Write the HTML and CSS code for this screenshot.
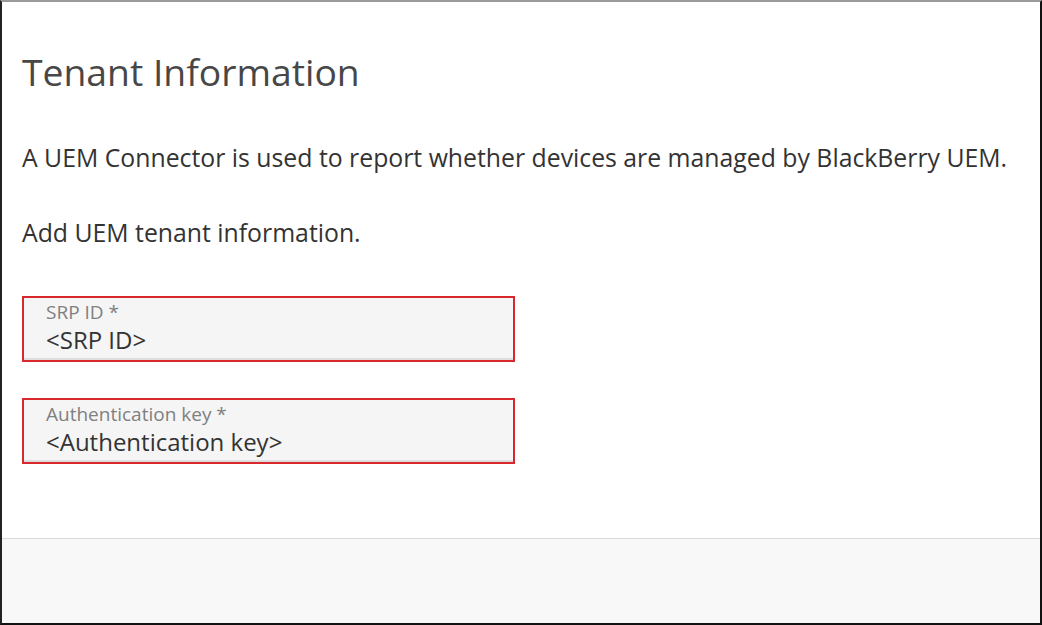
FILE: index.html
```html
<!DOCTYPE html>
<html lang="en">

<head>
    <meta charset="UTF-8">
    <meta name="viewport" content="width=device-width, initial-scale=1.0">
    <title>Tenant Information</title>
    <link rel="stylesheet" href="styles.css">
</head>

<body>
    <div id="dialog">
        <div id="content">
            <h1 class="title">Tenant Information</h1>
            <p class="text">A UEM Connector is used to report whether devices are managed by BlackBerry UEM.</p>
            <p class="text">Add UEM tenant information.</p>
            <div class="field">
                <div class="field-label">SRP ID *</div>
                <div class="field-value">&lt;SRP ID&gt;</div>
            </div>
            <div class="field">
                <div class="field-label">Authentication key *</div>
                <div class="field-value">&lt;Authentication key&gt;</div>
            </div>
        </div>
        <div id="footer"></div>
    </div>
</body>

</html>
```

FILE: styles.css
```css
html,
body {
    margin: 0;
    height: 100%;
}

body {
    font-family: "Open Sans", Arial, sans-serif;
    background-color: #fff;
}

#dialog {
    height: 625px;
    box-sizing: border-box;
    border-top: 2px solid #9a9a9a;
    border-left: 2px solid #222;
    border-right: 2px solid #111;
    border-bottom: 2px solid #111;
    display: flex;
    flex-direction: column;
}

#content {
    flex: 1;
    padding: 0 20px;
}

.title {
    font-size: 37.3px;
    font-weight: 400;
    color: #474747;
    margin: 45px 0 0;
    line-height: 50px;
}

.text {
    font-size: 24.8px;
    color: #333;
    margin: 0;
    line-height: 30px;
}

.title + .text {
    margin-top: 45px;
}

.text + .text {
    margin-top: 45px;
}

.field {
    width: 467px;
    height: 62px;
    background-color: #f5f5f5;
    border: 2px solid #d9272e;
    box-shadow: inset 0 -2px 0 #dedede;
    padding: 0 0 0 22px;
}

.text + .field {
    margin-top: 49px;
}

.field + .field {
    margin-top: 36px;
}

.field-label {
    font-size: 19px;
    color: #808080;
    line-height: 26px;
    margin-top: 1px;
}

.field-value {
    font-size: 24px;
    color: #333;
    line-height: 30px;
}

#footer {
    height: 84px;
    background-color: #f8f8f8;
    border-top: 1px solid #dcdcdc;
}
```
